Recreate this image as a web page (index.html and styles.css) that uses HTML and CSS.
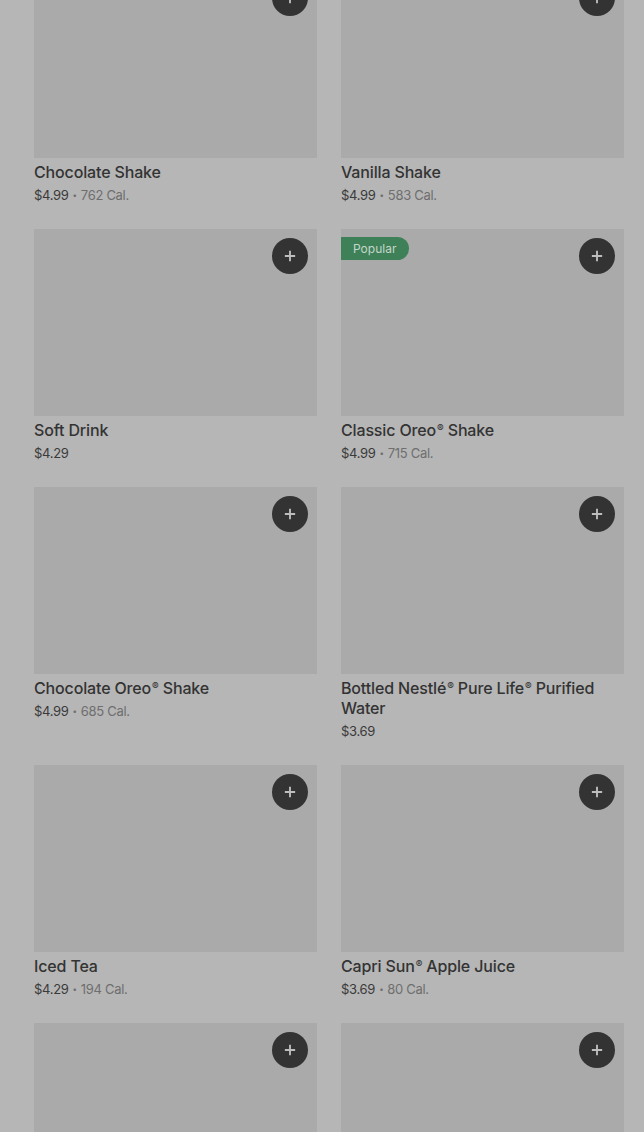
FILE: index.html
```html
<!DOCTYPE html>
<html lang="en">
  <head>
    <meta charset="UTF-8" />
    <meta name="viewport" content="width=device-width, initial-scale=1.0" />
    <title>Menu</title>
    <link rel="stylesheet" href="styles.css">
  </head>
  <body>
    <div class="menu">
      <div class="grid">
        <div class="item">
          <div class="photo"><button class="add"><svg viewBox="0 0 14 14"><path d="M7 1v12M1 7h12" /></svg></button></div>
          <div class="name">Chocolate Shake</div>
          <div class="meta"><span class="price">$4.99</span><span class="dot">•</span>762 Cal.</div>
        </div>
        <div class="item">
          <div class="photo"><button class="add"><svg viewBox="0 0 14 14"><path d="M7 1v12M1 7h12" /></svg></button></div>
          <div class="name">Vanilla Shake</div>
          <div class="meta"><span class="price">$4.99</span><span class="dot">•</span>583 Cal.</div>
        </div>
        <div class="item">
          <div class="photo"><button class="add"><svg viewBox="0 0 14 14"><path d="M7 1v12M1 7h12" /></svg></button></div>
          <div class="name">Soft Drink</div>
          <div class="meta"><span class="price">$4.29</span></div>
        </div>
        <div class="item">
          <div class="photo"><span class="badge">Popular</span><button class="add"><svg viewBox="0 0 14 14"><path d="M7 1v12M1 7h12" /></svg></button></div>
          <div class="name">Classic Oreo<span class="reg">®</span> Shake</div>
          <div class="meta"><span class="price">$4.99</span><span class="dot">•</span>715 Cal.</div>
        </div>
        <div class="item">
          <div class="photo"><button class="add"><svg viewBox="0 0 14 14"><path d="M7 1v12M1 7h12" /></svg></button></div>
          <div class="name">Chocolate Oreo<span class="reg">®</span> Shake</div>
          <div class="meta"><span class="price">$4.99</span><span class="dot">•</span>685 Cal.</div>
        </div>
        <div class="item">
          <div class="photo"><button class="add"><svg viewBox="0 0 14 14"><path d="M7 1v12M1 7h12" /></svg></button></div>
          <div class="name">Bottled Nestlé<span class="reg">®</span> Pure Life<span class="reg">®</span> Purified Water</div>
          <div class="meta"><span class="price">$3.69</span></div>
        </div>
        <div class="item">
          <div class="photo"><button class="add"><svg viewBox="0 0 14 14"><path d="M7 1v12M1 7h12" /></svg></button></div>
          <div class="name">Iced Tea</div>
          <div class="meta"><span class="price">$4.29</span><span class="dot">•</span>194 Cal.</div>
        </div>
        <div class="item">
          <div class="photo"><button class="add"><svg viewBox="0 0 14 14"><path d="M7 1v12M1 7h12" /></svg></button></div>
          <div class="name">Capri Sun<span class="reg">®</span> Apple Juice</div>
          <div class="meta"><span class="price">$3.69</span><span class="dot">•</span>80 Cal.</div>
        </div>
        <div class="item">
          <div class="photo"><button class="add"><svg viewBox="0 0 14 14"><path d="M7 1v12M1 7h12" /></svg></button></div>
        </div>
        <div class="item">
          <div class="photo"><button class="add"><svg viewBox="0 0 14 14"><path d="M7 1v12M1 7h12" /></svg></button></div>
        </div>
      </div>
    </div>
  </body>
</html>
```

FILE: styles.css
```css
body {
  margin: 0;
  padding: 0;
  background-color: #b6b6b6;
  font-family: Inter, "Noto Sans", sans-serif;
  overflow: hidden;
}
.menu {
  padding: 0 20px 0 34px;
  margin-top: -29px;
}
.grid {
  display: grid;
  grid-template-columns: 1fr 1fr;
  column-gap: 24px;
  row-gap: 24px;
}
.photo {
  position: relative;
  height: 187px;
  background-color: #aaaaaa;
}
.add {
  position: absolute;
  top: 9px;
  right: 9px;
  width: 36px;
  height: 36px;
  border: none;
  border-radius: 50%;
  background-color: #333;
  padding: 0;
  display: flex;
  align-items: center;
  justify-content: center;
}
.add svg {
  width: 12px;
  height: 12px;
  stroke: #bdbdbd;
  stroke-width: 2.2;
  fill: none;
}
.badge {
  position: absolute;
  top: 8px;
  left: 0;
  height: 23px;
  padding: 0 13px 0 12px;
  line-height: 23px;
  font-size: 12px;
  color: #c4d6ca;
  background-color: #3e8158;
  border-radius: 0 12px 12px 0;
}
.name {
  margin-top: 4px;
  font-size: 16px;
  line-height: 20px;
  font-weight: 500;
  letter-spacing: -0.15px;
  color: #333;
}
.reg {
  font-size: 10px;
  vertical-align: 4px;
  line-height: 0;
  margin-left: 1px;
}
.meta {
  margin-top: 3px;
  font-size: 13px;
  line-height: 20px;
  letter-spacing: -0.3px;
  color: #6e6e6e;
}
.price {
  color: #3a3a3a;
}
.dot {
  font-size: 8px;
  margin: 0 4px;
  vertical-align: 2px;
}
```
